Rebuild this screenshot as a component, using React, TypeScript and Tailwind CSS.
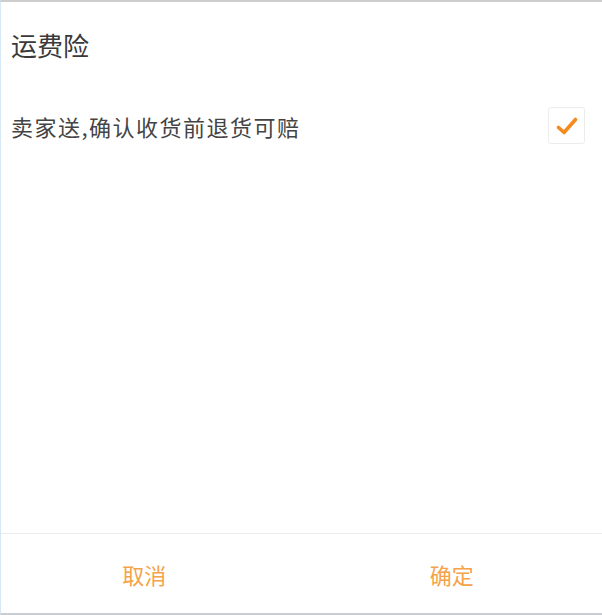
import React, { useState } from "react";

const App = () => {
  const [checked, setChecked] = useState(true);

  return (
    <div
      className="flex h-[615px] w-[602px] flex-col border-t-2 border-b-2 border-l border-t-[#cdcdcd] border-b-[#c9ccd0] border-l-[#d6e8f5] bg-white"
      style={{ fontFamily: '"Noto Sans CJK SC", "Noto Sans", sans-serif' }}
    >
      {/* Title */}
      <div className="pl-[10px] pt-[26px] text-[26px] leading-[34px] text-[#3a3a3a]">运费险</div>

      {/* Option row */}
      <div className="mt-[45px] flex items-center justify-between pl-[10px] pr-[17px]">
        <span className="text-[22px] leading-[30px] tracking-[1.5px] text-[#444]">卖家送,确认收货前退货可赔</span>
        <button
          onClick={() => setChecked(!checked)}
          className="flex h-[37px] w-[37px] items-center justify-center rounded-[3px] border border-[#ececec] bg-white"
        >
          {checked && (
            <svg width="24" height="24" viewBox="0 0 24 24" fill="none">
              <path
                d="M3.5 13.5l5.5 5L20.5 5.5"
                stroke="#f58a1f"
                strokeWidth={3.6}
                strokeLinecap="round"
                strokeLinejoin="round"
              />
            </svg>
          )}
        </button>
      </div>

      <div className="flex-1" />

      {/* Footer buttons */}
      <div className="grid h-[80px] grid-cols-2 border-t border-[#ececec]">
        <button className="pr-[14px] pt-[2px] text-[22px] text-[#f6a348]">取消</button>
        <button className="pt-[2px] text-[22px] text-[#f6a348]">确定</button>
      </div>
    </div>
  );
};

export default App;
